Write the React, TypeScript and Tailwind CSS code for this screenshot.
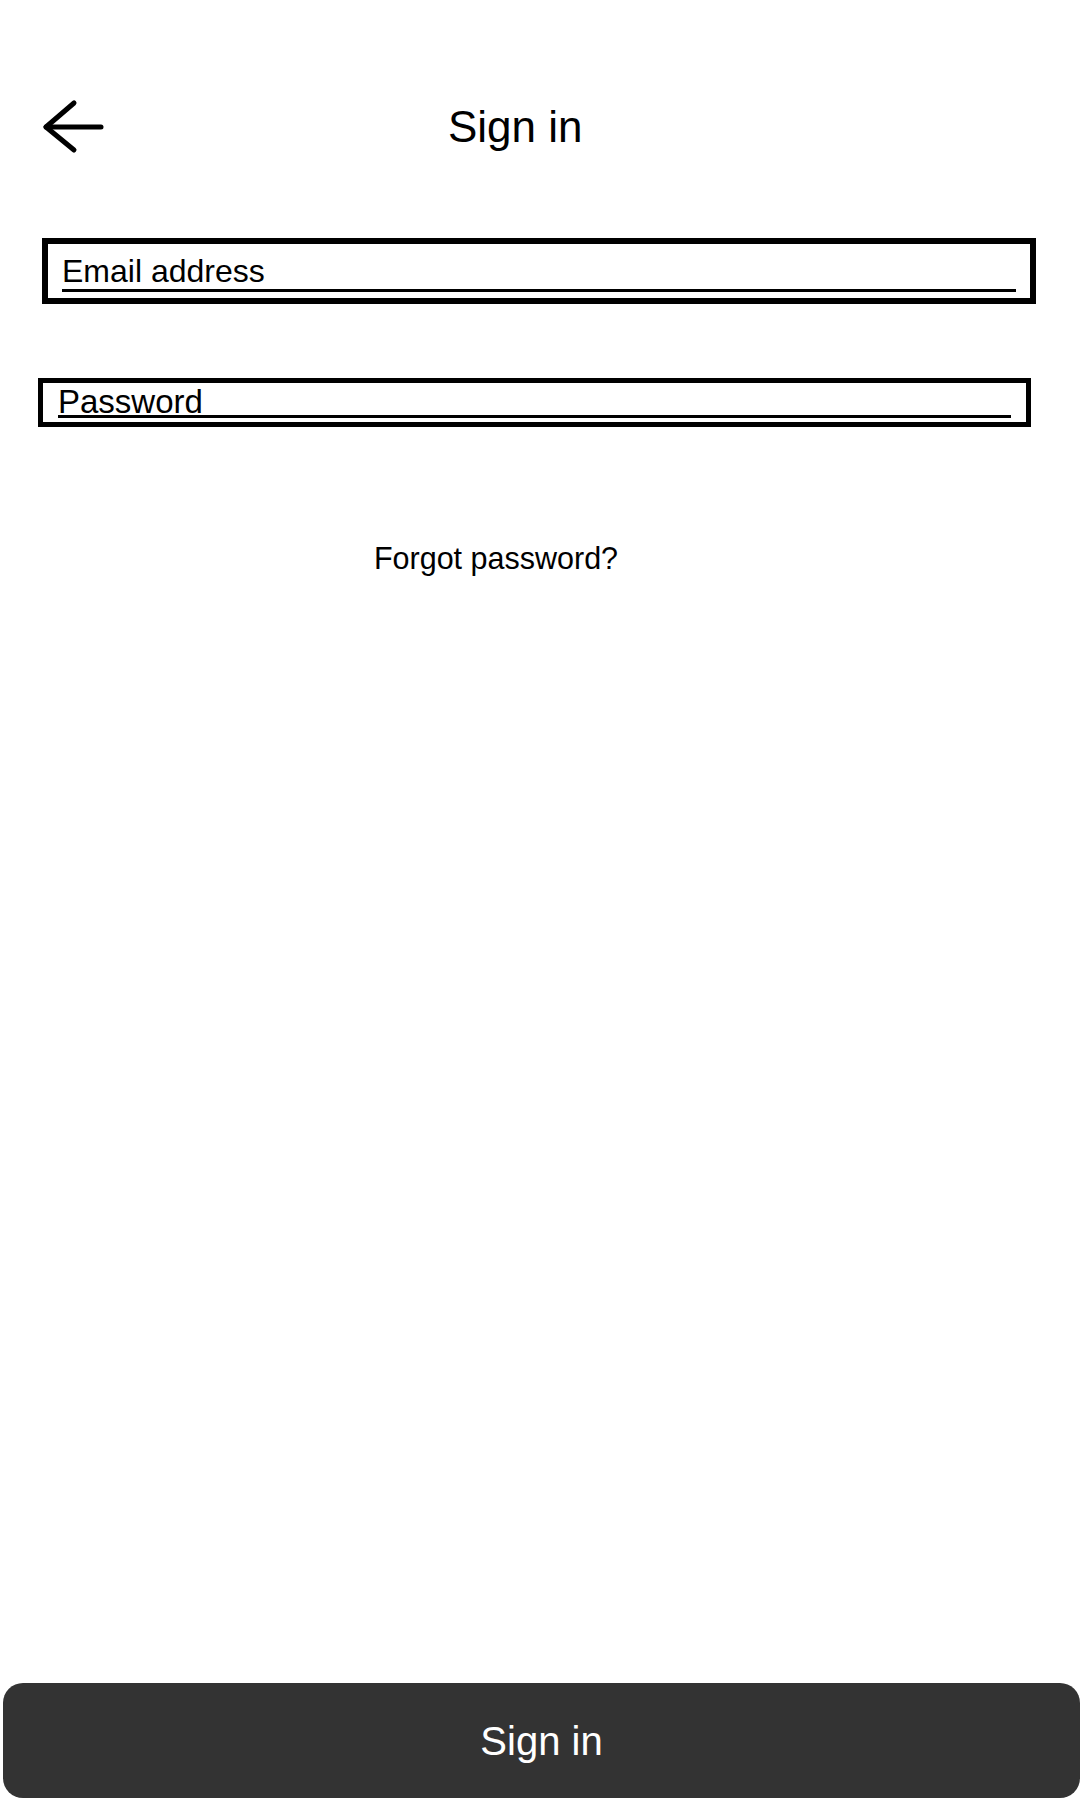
import React from "react";

// Sign in screen
export default function App() {
  return (
    <div
      className="min-h-screen bg-white text-black flex flex-col pt-[99px]"
      style={{ fontFamily: '"Liberation Sans", Arial, sans-serif' }}
    >
      {/* Header */}
      <div className="h-[56px] flex items-center pl-[42px]">
        <svg width="62" height="56" viewBox="0 0 62 56" fill="none" stroke="black" strokeWidth="5" strokeLinecap="round" strokeLinejoin="round">
          <path d="M4 28 L59 28" />
          <path d="M32 4 L4 28 L32 51" />
        </svg>
        <h1 className="ml-[344px] text-[44px] leading-[56px] font-normal">Sign in</h1>
      </div>

      {/* Email */}
      <div className="mt-[83px] ml-[42px] w-[994px] border-[6px] border-black pt-[9px] pb-[6px] px-[14px]">
        <div className="border-b-[3px] border-black text-[32px] leading-[36px]">Email address</div>
      </div>

      {/* Password */}
      <div className="mt-[74px] ml-[38px] w-[993px] border-[5px] border-black pt-[5px] pb-[4px] px-[15px]">
        <div className="border-b-[3px] border-black text-[33px] leading-[27px]">Password</div>
      </div>

      {/* Forgot */}
      <div className="mt-[115px] w-[992px] text-center text-[30.5px] leading-[32px]">Forgot password?</div>

      {/* Button */}
      <button className="mt-auto mb-[2px] ml-[3px] h-[115px] rounded-[20px] bg-[#333333] text-white text-[40px] leading-[44px]">
        Sign in
      </button>
    </div>
  );
}
